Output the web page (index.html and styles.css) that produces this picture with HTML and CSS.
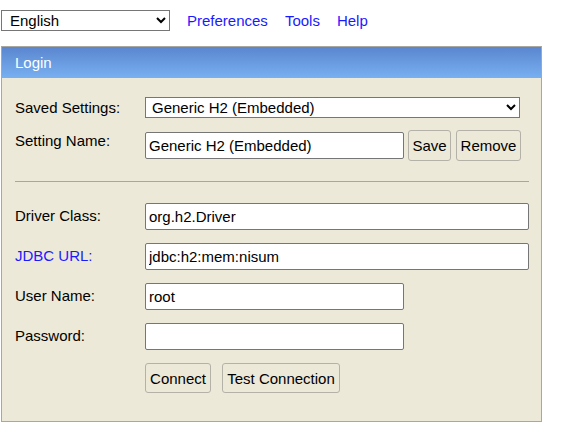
FILE: index.html
```html
<!DOCTYPE html>
<html lang="en">
<head>
<meta charset="utf-8">
<title>H2 Console</title>
<link rel="stylesheet" href="styles.css">
</head>
<body>
<div class="topbar">
  <select class="lang"><option>English</option></select>
  <nav class="links">
    <a href="#">Preferences</a>
    <a href="#">Tools</a>
    <a href="#">Help</a>
  </nav>
</div>
<div class="panel">
  <div class="panel-head">Login</div>
  <div class="panel-body">
    <div class="row row-saved">
      <label class="lbl">Saved Settings:</label>
      <select class="saved"><option>Generic H2 (Embedded)</option></select>
    </div>
    <div class="row row-name">
      <label class="lbl">Setting Name:</label>
      <input class="txt short" type="text" value="Generic H2 (Embedded)">
      <button class="btn btn-save">Save</button>
      <button class="btn btn-remove">Remove</button>
    </div>
    <hr class="sep">
    <div class="row field first">
      <label class="lbl">Driver Class:</label>
      <input class="txt long" type="text" value="org.h2.Driver">
    </div>
    <div class="row field">
      <label class="lbl link-lbl">JDBC URL:</label>
      <input class="txt long" type="text" value="jdbc:h2:mem:nisum">
    </div>
    <div class="row field">
      <label class="lbl">User Name:</label>
      <input class="txt short" type="text" value="root">
    </div>
    <div class="row field">
      <label class="lbl">Password:</label>
      <input class="txt short" type="password" value="">
    </div>
    <div class="row actions">
      <button class="btn btn-connect">Connect</button>
      <button class="btn btn-test">Test Connection</button>
    </div>
  </div>
</div>
</body>
</html>
```
FILE: styles.css
```css
* { box-sizing: border-box; }
body {
  margin: 0;
  background: #ffffff;
  font-family: "Liberation Sans", Arial, sans-serif;
  font-size: 15px;
  color: #000;
}
.topbar {
  display: flex;
  align-items: center;
  padding: 10px 0 0 1px;
  height: 31px;
}
.lang {
  width: 169px;
  height: 21px;
  font-family: "Liberation Sans", Arial, sans-serif;
  font-size: 15px;
  padding: 0 0 0 4px;
  border: 1px solid #767676;
  border-radius: 0;
  background: #fff;
  color: #000;
}
.links {
  display: flex;
  gap: 17px;
  margin-left: 17px;
}
.links a {
  color: #1a1aff;
  text-decoration: none;
  font-size: 15px;
  line-height: 17px;
}
.panel {
  margin: 15px 0 0 1px;
  width: 541px;
  border: 1px solid #a8a8a0;
  background: #ece9d8;
}
.panel-head {
  height: 31px;
  padding-left: 13px;
  display: flex;
  align-items: center;
  color: #fff;
  font-size: 15px;
  background: linear-gradient(to bottom, #5a86cf, #78b0f1);
}
.panel-body {
  padding: 19px 12px 28px 13px;
  display: flex;
  flex-direction: column;
}
.row {
  display: flex;
}
.lbl {
  width: 130px;
  flex: none;
  line-height: 17px;
  font-size: 15px;
}
.link-lbl { color: #1a1aff; }
.row-saved {
  height: 21px;
  align-items: center;
}
.saved {
  width: 375px;
  height: 21px;
  font-family: "Liberation Sans", Arial, sans-serif;
  font-size: 15px;
  padding: 0 0 0 2px;
  border: 1px solid #767676;
  border-radius: 0;
  background: #fff;
  color: #000;
}
.row-name {
  margin-top: 12px;
  height: 31px;
  align-items: flex-start;
}
.row-name .lbl { padding-top: 2px; }
.row-name .txt { margin-top: 2px; height: 27px; }
.txt {
  height: 27px;
  border: 1px solid #767676;
  border-radius: 2px;
  background: #fff;
  font-family: "Liberation Sans", Arial, sans-serif;
  font-size: 15px;
  color: #000;
  padding: 0 3px;
}
.short { width: 259px; }
.long { width: 384px; }
.btn {
  height: 31px;
  border: 1px solid #b4b2a8;
  border-radius: 3px;
  background: #ece9d8;
  font-family: "Liberation Sans", Arial, sans-serif;
  font-size: 15px;
  color: #000;
  padding: 0 3px;
}
.btn-save { width: 43px; margin-left: 4px; }
.btn-remove { width: 65px; margin-left: 5px; }
.sep {
  margin: 20px 0 0 0;
  border: 0;
  height: 1px;
  background: #a6a6a6;
}
.field {
  margin-top: 13px;
  height: 27px;
  align-items: flex-start;
}
.field.first { margin-top: 21px; }
.field .lbl { padding-top: 4px; }
.actions {
  margin-top: 13px;
  padding-left: 130px;
  gap: 11px;
}
.actions .btn { height: 30px; }
.btn-connect { width: 66px; }
.btn-test { width: 118px; }
```
